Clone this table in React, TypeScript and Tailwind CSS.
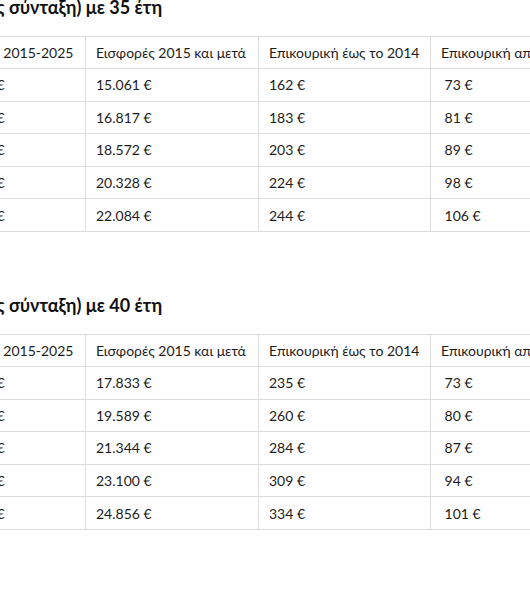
const tables = [
  {
    title: "Παράδειγμα 1 (πλήρης σύνταξη) με 35 έτη",
    rows: [
      ["111.212 €", "15.061 €", "162 €", "\u00a073 €"],
      ["111.518 €", "16.817 €", "183 €", "\u00a081 €"],
      ["111.824 €", "18.572 €", "203 €", "\u00a089 €"],
      ["112.431 €", "20.328 €", "224 €", "\u00a098 €"],
      ["112.437 €", "22.084 €", "244 €", "\u00a0106 €"],
    ],
  },
  {
    title: "Παράδειγμα 2 (πλήρης σύνταξη) με 40 έτη",
    rows: [
      ["111.212 €", "17.833 €", "235 €", "\u00a073 €"],
      ["111.518 €", "19.589 €", "260 €", "\u00a080 €"],
      ["111.824 €", "21.344 €", "284 €", "\u00a087 €"],
      ["112.431 €", "23.100 €", "309 €", "\u00a094 €"],
      ["112.437 €", "24.856 €", "334 €", "\u00a0101 €"],
    ],
  },
];

const headers = [
  "Εισφορές 2015-2025",
  "Εισφορές 2015 και μετά",
  "Επικουρική έως το 2014",
  "Επικουρική από το 2015",
];

function PensionTable({ title, rows }: { title: string; rows: string[][] }) {
  return (
    <section>
      <h3 className="-ml-[111px] text-[18px] leading-6 font-bold text-[#111] whitespace-nowrap">{title}</h3>
      <table className="mt-[17px] table-fixed border-collapse text-[14px] text-[#1c1c1c]">
        <colgroup>
          <col className="w-[155px]" />
          <col className="w-[173px]" />
          <col className="w-[172px]" />
          <col className="w-[190px]" />
        </colgroup>
        <thead>
          <tr>
            {headers.map((h) => (
              <th
                key={h}
                className="h-[32px] border border-[#dcdcdc] pl-[10px] pr-[10px] text-left font-normal whitespace-nowrap"
              >
                {h}
              </th>
            ))}
          </tr>
        </thead>
        <tbody>
          {rows.map((r, i) => (
            <tr key={i}>
              {r.map((c, j) => (
                <td
                  key={j}
                  className="h-[32.6px] border border-[#dcdcdc] pl-[10px] pr-[10px] whitespace-nowrap"
                >
                  {c}
                </td>
              ))}
            </tr>
          ))}
        </tbody>
      </table>
    </section>
  );
}

export default function App() {
  return (
    <div className="w-[530px] h-[611px] overflow-hidden bg-white font-['Lato','Noto_Sans',sans-serif]">
      <div className="-mt-[5px] -ml-[70px] w-max flex flex-col gap-[61px]">
        {tables.map((t) => (
          <PensionTable key={t.title} title={t.title} rows={t.rows} />
        ))}
      </div>
    </div>
  );
}
